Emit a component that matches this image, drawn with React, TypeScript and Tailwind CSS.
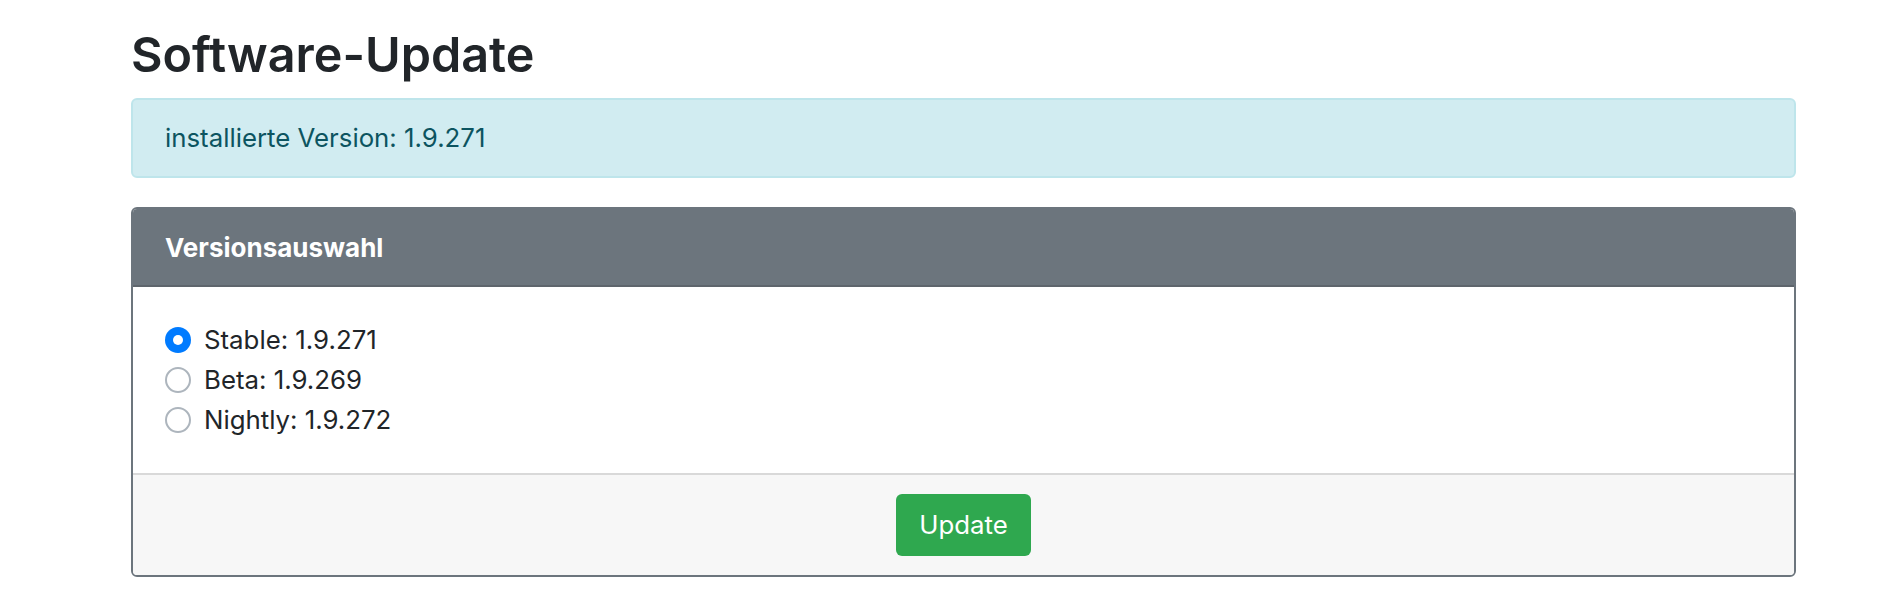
import React from "react";

const font = { fontFamily: "Inter, 'Noto Sans', sans-serif" };

function Radio({ checked, label }: { checked?: boolean; label: string }) {
  return (
    <div className="flex h-[40px] items-center">
      {checked ? (
        <span className="flex h-[26px] w-[26px] items-center justify-center rounded-full bg-[#007bff]">
          <span className="h-[10px] w-[10px] rounded-full bg-white" />
        </span>
      ) : (
        <span className="h-[26px] w-[26px] rounded-full border-2 border-[#adb5bd] bg-white" />
      )}
      <span className="ml-[13px] text-[25.8px] leading-[38px] text-[#212529]">{label}</span>
    </div>
  );
}

export default function App() {
  return (
    <div className="min-h-[602px] w-full bg-white" style={font}>
      <div className="ml-[131px] w-[1665px] pt-[24px]">
        <h2 className="mb-[12px] text-[48.5px] font-semibold leading-[62px] text-[#212529]">
          Software-Update
        </h2>
        <div className="rounded-[6px] border-2 border-[#bee5eb] bg-[#d1ecf1] px-[32px] py-[19px] text-[25.8px] leading-[38px] text-[#0c5460]">
          installierte Version: 1.9.271
        </div>
        <div className="mt-[29px] overflow-hidden rounded-[6px] border-2 border-[#6c757d]">
          <div className="flex h-[78px] items-center border-b-2 border-[#5e656c] bg-[#6c757d] px-[32px] text-[26px] font-bold text-white">
            Versionsauswahl
          </div>
          <div className="bg-white px-[32px] pb-[33px] pt-[33px]">
            <Radio checked label="Stable: 1.9.271" />
            <Radio label="Beta: 1.9.269" />
            <Radio label="Nightly: 1.9.272" />
          </div>
          <div className="flex justify-center border-t-2 border-[#d9d9d9] bg-[#f7f7f7] pb-[19px] pt-[19px]">
            <button className="h-[62px] rounded-[6px] bg-[#2fa84f] px-[23px] text-[25.8px] leading-[38px] text-white">
              Update
            </button>
          </div>
        </div>
      </div>
    </div>
  );
}
